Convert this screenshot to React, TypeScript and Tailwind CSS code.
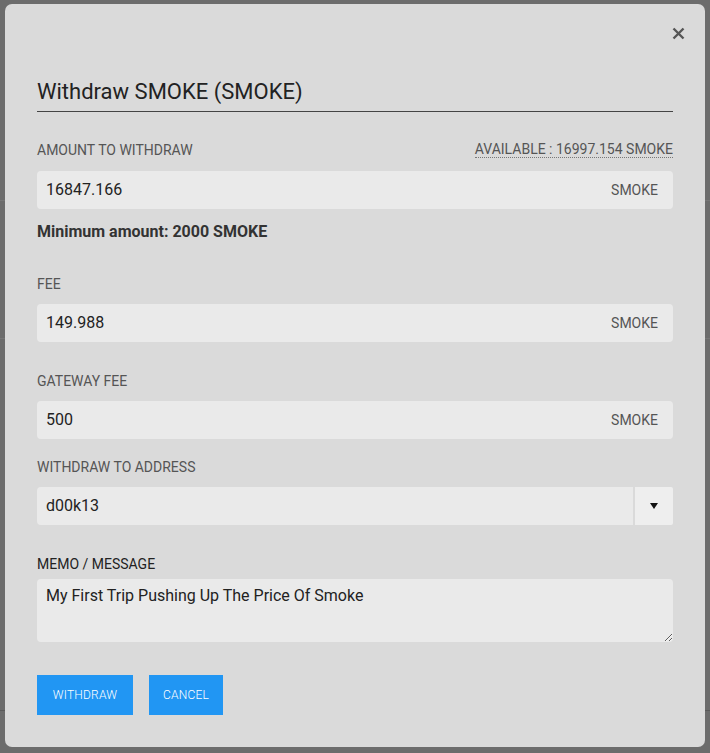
import React from "react";

const font = { fontFamily: "Roboto, 'Liberation Sans', sans-serif" };

function Field({ value, suffix }: { value: string; suffix?: string }) {
  return (
    <div className="flex h-[38px] items-center justify-between rounded-[4px] bg-[#eaeaea] pl-[9px] pr-[15px]">
      <span className="text-[16px] text-[#222]">{value}</span>
      {suffix && <span className="text-[14px] text-[#555]">{suffix}</span>}
    </div>
  );
}

export default function App() {
  return (
    <div className="relative h-[753px] w-[710px] overflow-hidden bg-[#6c6c6c]" style={font}>
      {/* faint page content behind the overlay */}
      <div className="absolute left-0 right-0 top-[200px] h-px bg-[#777]" />
      <div className="absolute left-0 right-0 top-[338px] h-px bg-[#777]" />
      <div className="absolute left-0 right-0 top-[710px] h-px bg-[#5a5a5a]" />

      <div className="relative ml-[5px] mt-[4px] h-[743px] w-[700px] rounded-[7px] bg-[#dadada] px-8">
        <button className="absolute right-[20px] top-[23px] flex h-[13px] w-[13px] items-center justify-center">
          <svg width="13" height="13" viewBox="0 0 13 13">
            <path d="M1.5 1.5 L11.5 11.5 M11.5 1.5 L1.5 11.5" stroke="#555" strokeWidth="2.4" strokeLinecap="butt" />
          </svg>
        </button>

        <div className="pt-[74px]">
          <div className="border-b border-[#444] pb-[5px] text-[22px] leading-[28px] text-[#222]">
            Withdraw SMOKE (SMOKE)
          </div>
        </div>

        <div className="mt-[29px] flex items-center justify-between text-[14px] leading-[16px] text-[#555]">
          <span>AMOUNT TO WITHDRAW</span>
          <span className="border-b border-dotted border-[#777]">AVAILABLE : 16997.154 SMOKE</span>
        </div>
        <div className="mt-[13px]">
          <Field value="16847.166" suffix="SMOKE" />
        </div>
        <div className="mt-[13px] text-[16px] font-bold leading-[20px] text-[#333]">
          Minimum amount: 2000 SMOKE
        </div>

        <div className="mt-[34px] text-[14px] leading-[16px] text-[#555]">FEE</div>
        <div className="mt-[12px]">
          <Field value="149.988" suffix="SMOKE" />
        </div>

        <div className="mt-[31px] text-[14px] leading-[16px] text-[#555]">GATEWAY FEE</div>
        <div className="mt-[12px]">
          <Field value="500" suffix="SMOKE" />
        </div>

        <div className="mt-[20px] text-[14px] leading-[16px] text-[#555]">WITHDRAW TO ADDRESS</div>
        <div className="mt-[12px] flex h-[38px] gap-[2px]">
          <div className="flex flex-1 items-center rounded-l-[4px] bg-[#eaeaea] pl-[9px]">
            <span className="text-[16px] text-[#222]">d00k13</span>
          </div>
          <div className="flex w-[38px] items-center justify-center rounded-r-[2px] bg-[#eeeeee]">
            <svg width="8" height="7" viewBox="0 0 8 7">
              <path d="M0 0 H8 L4 6 Z" fill="#111" />
            </svg>
          </div>
        </div>

        <div className="mt-[31px] text-[14px] leading-[16px] text-[#222]">MEMO / MESSAGE</div>
        <textarea
          className="mt-[7px] block h-[63px] w-full rounded-[4px] bg-[#eaeaea] px-[9px] pt-[7px] text-[16px] leading-[20px] text-[#222] outline-none"
          style={font}
          defaultValue="My First Trip Pushing Up The Price Of Smoke"
        />

        <div className="mt-[33px] flex gap-[16px]">
          <button className="h-[40px] w-[96px] bg-[#2196f3] text-[12px] font-light tracking-[0.2px] text-white">WITHDRAW</button>
          <button className="h-[40px] w-[74px] bg-[#2196f3] text-[12px] font-light tracking-[0.2px] text-white">CANCEL</button>
        </div>
      </div>
    </div>
  );
}
